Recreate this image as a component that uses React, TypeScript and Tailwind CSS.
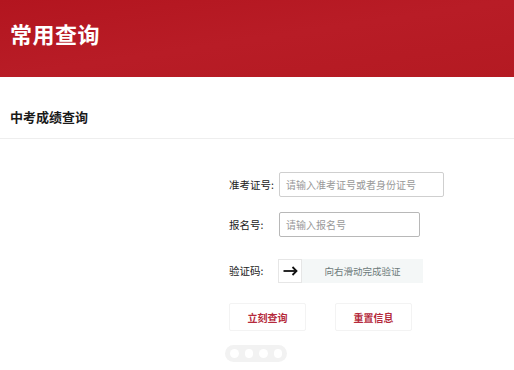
export default function App() {
  return (
    <div
      className="w-[514px] h-[370px] bg-white overflow-hidden"
      style={{ fontFamily: '"Noto Sans CJK SC", "Noto Sans", sans-serif' }}
    >
      <header className="h-[77px] bg-gradient-to-br from-[#b3151f] via-[#b81c26] to-[#b41a22] flex items-start">
        <h1 className="mt-[18px] ml-[10px] text-[22px] leading-[30px] font-bold text-white tracking-[0.5px]">
          常用查询
        </h1>
      </header>

      <div className="h-[62px] border-b border-[#eeeeee] flex items-center pl-[10px] pt-[18px]">
        <h2 className="text-[13px] font-bold text-[#1a1a1a]">中考成绩查询</h2>
      </div>

      <div className="ml-[229px] mt-[33px] flex flex-col">
        <div className="flex items-center h-[25px]">
          <span className="w-[50px] text-[10.5px] text-[#222]">准考证号:</span>
          <div className="w-[165px] h-[25px] border border-[#cfcfcf] rounded-[2px] flex items-center px-[6px] text-[10px] text-[#999]">
            请输入准考证号或者身份证号
          </div>
        </div>

        <div className="flex items-center h-[25px] mt-[15px]">
          <span className="w-[50px] text-[10.5px] text-[#222]">报名号:</span>
          <div className="w-[141px] h-[25px] border border-[#b8b8b8] rounded-[2px] flex items-center px-[6px] text-[10px] text-[#999]">
            请输入报名号
          </div>
        </div>

        <div className="flex items-center h-[24px] mt-[22px]">
          <span className="w-[49px] text-[10.5px] text-[#222]">验证码:</span>
          <div className="w-[145px] h-[24px] bg-[#f4f7f7] flex items-center relative">
            <div className="w-[24px] h-[24px] bg-white border border-[#e6e6e6] flex items-center justify-center">
              <svg width="15" height="10" viewBox="0 0 15 10" fill="none" stroke="#111" strokeWidth="1.8">
                <path d="M0.5 5h13" />
                <path d="M9.5 1l4 4-4 4" />
              </svg>
            </div>
            <span className="flex-1 text-center text-[9.5px] text-[#6c7a7a]">向右滑动完成验证</span>
          </div>
        </div>

        <div className="flex gap-[29px] mt-[20px]">
          <button className="w-[77px] h-[28px] border border-[#f3f3f3] rounded-[2px] text-[10px] font-bold text-[#b52a3c]">
            立刻查询
          </button>
          <button className="w-[77px] h-[28px] border border-[#f3f3f3] rounded-[2px] text-[10px] font-bold text-[#b52a3c]">
            重置信息
          </button>
        </div>

        <div className="mt-[14px] -ml-[4px] w-[62px] h-[17px] rounded-full bg-[#f2f2f2] flex items-center gap-[6px] px-[5px] blur-[0.6px]">
          <span className="w-[9px] h-[9px] rounded-full bg-white" />
          <span className="w-[9px] h-[9px] rounded-full bg-white" />
          <span className="w-[9px] h-[9px] rounded-full bg-white" />
          <span className="w-[9px] h-[9px] rounded-full bg-white" />
        </div>
      </div>
    </div>
  )
}
